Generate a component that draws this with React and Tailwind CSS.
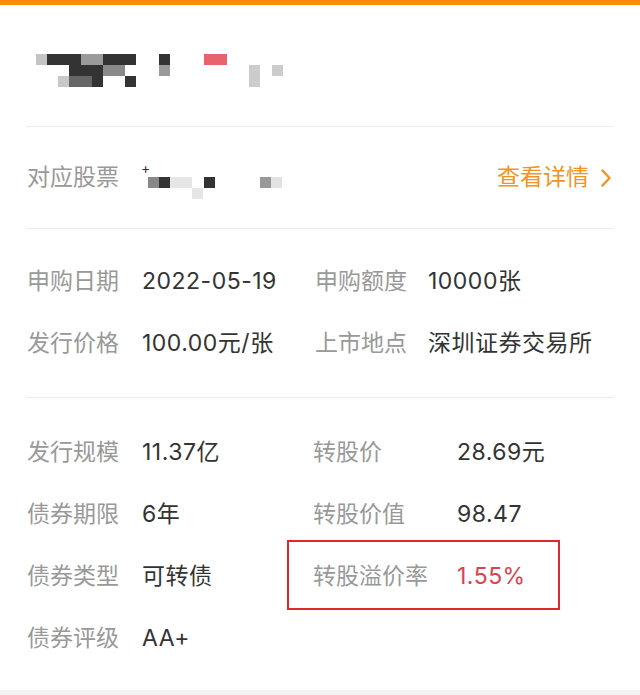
import React from 'react'

const font = { fontFamily: 'Inter, "Noto Sans CJK SC", sans-serif' }

// pixelated (mosaic) blocks standing in for the hidden bond name
const titleBlocks = [
  [0, 0, 11, 11, '#c4c4c4'], [11, 0, 34, 11, '#333333'], [45, 0, 22, 11, '#9a9a9a'],
  [67, 0, 33, 11, '#333333'], [123, 0, 11, 11, '#333333'], [168, 0, 23, 11, '#e8636b'],
  [33, 11, 34, 11, '#333333'], [67, 11, 22, 11, '#8a8a8a'], [123, 11, 11, 11, '#9a9a9a'],
  [213, 11, 11, 22, '#cccccc'], [236, 11, 11, 11, '#cccccc'],
  [22, 22, 11, 11, '#c8c8c8'], [33, 22, 23, 11, '#666666'], [56, 22, 11, 11, '#333333'],
  [89, 22, 11, 11, '#333333'],
]

const stockBlocks = [
  [6, 12, 11, 11, '#888888'], [17, 12, 11, 11, '#333333'], [28, 12, 22, 11, '#e6e6e6'],
  [62, 12, 11, 11, '#333333'], [118, 12, 11, 11, '#999999'], [129, 12, 11, 11, '#e2e2e2'],
  [50, 23, 11, 11, '#e6e6e6'],
]

const Mosaic = ({ blocks, width, height, className }) => (
  <svg width={width} height={height} className={className}>
    {blocks.map(([x, y, w, h, c], i) => (
      <rect key={i} x={x} y={y} width={w} height={h} fill={c} />
    ))}
  </svg>
)

const Divider = () => <div className="mx-[26px] h-px bg-[#ececec]" />

const Row = ({ label, value, labelW, valueClass = 'text-[#333333]' }) => (
  <div className="flex h-[62px] items-center">
    <span className={`${labelW} shrink-0 text-[#999999]`}>{label}</span>
    <span className={`tracking-[0.5px] ${valueClass}`}>{value}</span>
  </div>
)

export default function App() {
  return (
    <div className="w-[640px] bg-white text-[23px] leading-none" style={font}>
      <div className="h-[5px] bg-[#fe8a0a]" />

      {/* title */}
      <div className="h-[121px] pl-[36px] pt-[49px]">
        <Mosaic blocks={titleBlocks} width={250} height={33} />
      </div>
      <Divider />

      {/* stock */}
      <div className="flex h-[101px] items-center px-[27px]">
        <span className="w-[115px] shrink-0 text-[#999999]">对应股票</span>
        <div className="relative mt-[8px]">
          <Mosaic blocks={stockBlocks} width={145} height={34} />
          <span className="absolute -left-[1px] -top-[4px] text-[14px] text-[#333333]">+</span>
        </div>
        <div className="ml-auto flex items-center gap-[12px] text-[#f39322]">
          <span>查看详情</span>
          <svg width="10" height="18" viewBox="0 0 10 18" className="mr-[2px]">
            <polyline points="1.5,1.5 8.5,9 1.5,16.5" fill="none" stroke="#f39322" strokeWidth="2.4" strokeLinecap="round" strokeLinejoin="round" />
          </svg>
        </div>
      </div>
      <Divider />

      {/* subscription */}
      <div className="grid grid-cols-[288px_1fr] px-[27px] pt-[21px] pb-[23px]">
        <Row label="申购日期" value="2022-05-19" labelW="w-[115px]" />
        <Row label="申购额度" value="10000张" labelW="w-[113px]" />
        <Row label="发行价格" value="100.00元/张" labelW="w-[115px]" />
        <Row label="上市地点" value="深圳证券交易所" labelW="w-[113px]" />
      </div>
      <Divider />

      {/* bond details */}
      <div className="grid grid-cols-[286px_1fr] px-[27px] pt-[23px] pb-[21px]">
        <Row label="发行规模" value="11.37亿" labelW="w-[115px]" />
        <Row label="转股价" value="28.69元" labelW="w-[144px]" />
        <Row label="债券期限" value="6年" labelW="w-[115px]" />
        <Row label="转股价值" value="98.47" labelW="w-[144px]" />
        <Row label="债券类型" value="可转债" labelW="w-[115px]" />
        <div className="relative">
          <Row label="转股溢价率" value="1.55%" labelW="w-[144px]" valueClass="text-[#d9434f]" />
          <div className="absolute -left-[26px] -top-[5px] h-[70px] w-[273px] border-2 border-[#e0282c]" />
        </div>
        <Row label="债券评级" value="AA+" labelW="w-[115px]" />
        <div />
      </div>

      <div className="h-[5px] bg-[#f3f3f3]" />
    </div>
  )
}
